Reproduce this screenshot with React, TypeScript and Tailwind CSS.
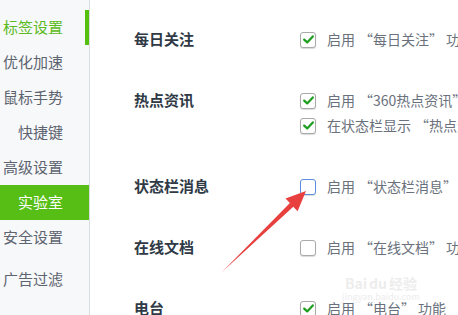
import React from "react";

const NAV = [
  { label: "标签设置", indicator: true },
  { label: "优化加速" },
  { label: "鼠标手势" },
  { label: "快捷键" },
  { label: "高级设置" },
  { label: "实验室", selected: true },
  { label: "安全设置" },
  { label: "广告过滤", extra: true },
];

type Opt = { text: string; checked: boolean; focus?: boolean };

const SECTIONS: { title: string; options: Opt[] }[] = [
  { title: "每日关注", options: [{ text: "启用“每日关注”功能", checked: true }] },
  {
    title: "热点资讯",
    options: [
      { text: "启用“360热点资讯”功能", checked: true },
      { text: "在状态栏显示“热点资讯”", checked: true },
    ],
  },
  { title: "状态栏消息", options: [{ text: "启用“状态栏消息”功能", checked: false, focus: true }] },
  { title: "在线文档", options: [{ text: "启用“在线文档”功能", checked: false }] },
  { title: "电台", options: [{ text: "启用“电台”功能", checked: true }] },
];

// full-width style quotes: pad the outer side of each quote mark
function Quoted({ text }: { text: string }) {
  const parts = text.split(/([“”])/);
  return (
    <>
      {parts.map((p, i) =>
        p === "“" ? (
          <span key={i} className="ml-[4px]">“</span>
        ) : p === "”" ? (
          <span key={i} className="mr-[3px]">”</span>
        ) : (
          <span key={i}>{p}</span>
        )
      )}
    </>
  );
}

function Checkbox({ checked, focus }: { checked: boolean; focus?: boolean }) {
  return (
    <span
      className={`w-[16px] h-[16px] shrink-0 rounded-[3px] border bg-white flex items-center justify-center shadow-[0_1px_1px_rgba(0,0,0,0.15)] ${
        focus ? "border-[#5b8ee0]" : "border-[#a9a9a9]"
      }`}
    >
      {checked && (
        <svg width="11" height="9" viewBox="0 0 11 9">
          <path d="M1.2 4.6 L4.2 7.4 L9.8 1.4" fill="none" stroke="#1e9e1e" strokeWidth="2.2" strokeLinecap="round" strokeLinejoin="round" />
        </svg>
      )}
    </span>
  );
}

export default function App() {
  return (
    <div
      className="relative w-[458px] h-[315px] overflow-hidden bg-white flex"
      style={{ fontFamily: '"Noto Sans CJK SC", "Noto Sans", sans-serif' }}
    >
      {/* Sidebar */}
      <div className="w-[90px] shrink-0 bg-[#f7f8fa] border-r border-[#d8dbe0] flex flex-col pt-[10px]">
        {NAV.map((item) => (
          <div
            key={item.label}
            className={`relative h-[35px] flex items-center justify-end pr-[26px] text-[15px] ${
              item.selected ? "bg-[#56be14] text-white" : item.indicator ? "text-[#5cba22]" : "text-[#5d6470]"
            } ${item.extra ? "mt-[7px]" : ""}`}
          >
            {item.label}
            {item.indicator && <span className="absolute right-0 top-0 h-full w-[4px] bg-[#56c00e]" />}
          </div>
        ))}
      </div>

      {/* Content */}
      <div className="flex-1 flex flex-col gap-[36px] pt-[27px] pl-[44px]">
        {SECTIONS.map((s) => (
          <div key={s.title} className="flex">
            <div className="w-[166px] shrink-0 h-[25px] flex items-center text-[15px] font-bold text-[#2f3a46]">
              {s.title}
            </div>
            <div className="flex flex-col">
              {s.options.map((o) => (
                <div key={o.text} className="h-[25px] flex items-center gap-[11px] whitespace-nowrap">
                  <Checkbox checked={o.checked} focus={o.focus} />
                  <span className="text-[14px] text-[#6a717c]">
                    <Quoted text={o.text} />
                  </span>
                </div>
              ))}
            </div>
          </div>
        ))}
      </div>

      {/* Watermark */}
      <div className="absolute left-[342px] top-[276px] flex flex-col items-center text-[#ededed] pointer-events-none">
        <div className="flex items-end gap-[2px] text-[14px] leading-none font-bold">
          <span>Bai</span>
          <span>du</span>
          <span>经验</span>
        </div>
        <span className="text-[9px] leading-none mt-[2px]">jingyan.baidu.com</span>
      </div>

      {/* Red arrow annotation */}
      <svg className="absolute left-0 top-0 pointer-events-none" width="458" height="315" viewBox="0 0 458 315">
        <polygon
          points="222,272 289.9,203.1 285.5,198.6 306,191 297.6,211.2 293.3,206.7"
          fill="#e8403f"
        />
      </svg>
    </div>
  );
}
